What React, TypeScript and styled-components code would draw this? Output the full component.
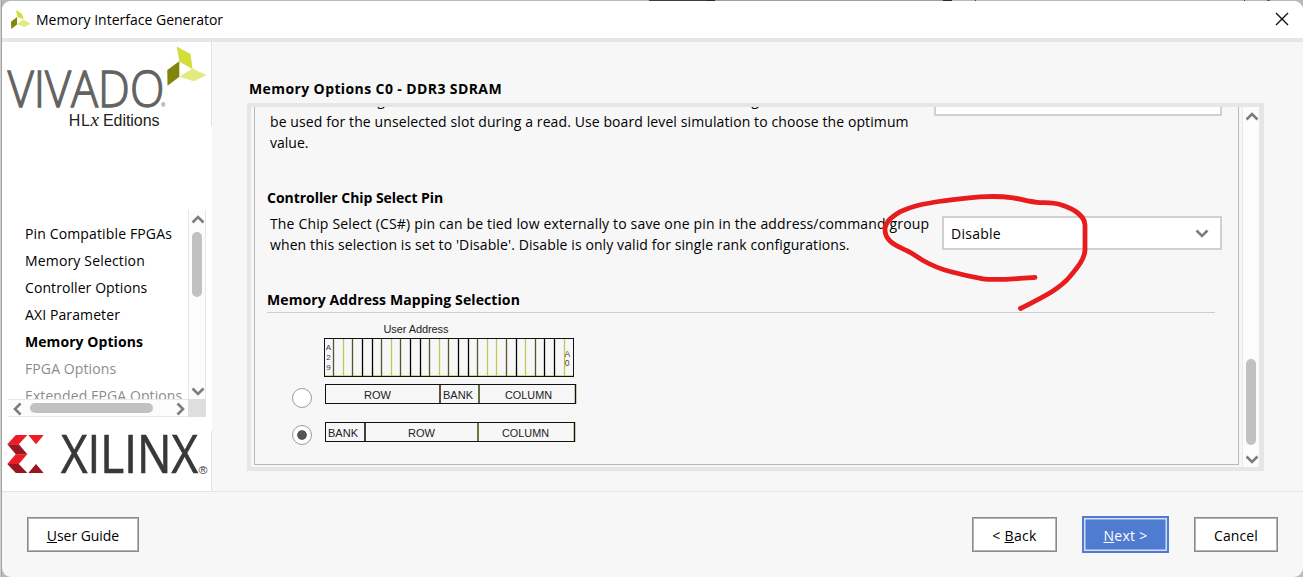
import React from 'react';
import styled, { createGlobalStyle } from 'styled-components';

const GlobalStyle = createGlobalStyle`
  * { box-sizing: border-box; }
  body { margin: 0; overflow: hidden; font: 14px "Open Sans", "Noto Sans", sans-serif; color: #000; }
`;

const Desktop = styled.div`
  width: 1303px;
  height: 577px;
  padding: 1px 0 0 2px;
  background:
    linear-gradient(90deg, transparent 649px, #3b3f4d 649px 707px, #2c2729 707px 715px, #9a9ea5 715px 943px, #2c2729 943px 952px, transparent 952px 975px, #3b3f4d 975px 976px, transparent 976px 1244px, #3b3f4d 1244px 1245px, transparent 1245px 1267px, #4a5a86 1267px 1270px, transparent 1270px) 0 0 / 100% 1px no-repeat,
    linear-gradient(90deg, #cfcfcf 1px, #a2a2a2 1px 2px, #b9b9b9 2px);
`;

const Window = styled.div`
  display: flex;
  flex-direction: column;
  position: relative;
  height: 576px;
  border-radius: 9px;
  overflow: hidden;
  background: #f7f7f7;
`;

const TitleBar = styled.header`
  display: flex;
  align-items: center;
  height: 41px;
  flex: none;
  padding: 0 14px 2px 8px;
  background: #fff;
  border-bottom: 4px solid #e6e6e6;
`;

const Text = styled.span<{ $ls?: number; $bold?: boolean }>`
  letter-spacing: ${(p) => p.$ls ?? 0}px;
  font-weight: ${(p) => (p.$bold ? 700 : 400)};
  white-space: nowrap;
`;

const TitleText = styled(Text)`
  flex: 1;
  margin-left: 5px;
  line-height: 20px;
  padding-top: 2px;
`;

const Body = styled.div`
  display: flex;
  height: 450px;
  flex: none;
  border-bottom: 1px solid #e4e4e4;
`;

const Sidebar = styled.aside`
  display: flex;
  flex-direction: column;
  width: 210px;
  flex: none;
  background: #fff;
`;

const LogoBox = styled.div<{ $h: number }>`
  height: ${(p) => p.$h}px;
  border-right: 1px solid #e2e2e2;
  svg { display: block; overflow: visible; }
`;

const NavArea = styled.div`
  display: grid;
  grid-template-columns: 180px 18px;
  grid-template-rows: 189px 18px;
  margin: 84px 0 14px 6px;
`;

const NavList = styled.nav`
  display: flex;
  flex-direction: column;
  overflow: hidden;
  padding: 10px 0 0 17px;
`;

const NavItem = styled(Text)<{ $dim?: boolean }>`
  flex: none;
  height: 27px;
  line-height: 27px;
  color: ${(p) => (p.$dim ? '#8c8c8c' : '#000')};
`;

const VScroll = styled.div`
  display: flex;
  flex-direction: column;
  align-items: center;
  background: #fcfcfc;
  border-left: 1px solid #e8e8e8;
  border-right: 1px solid #e8e8e8;
`;

const HScroll = styled.div`
  display: flex;
  align-items: center;
  background: #fcfcfc;
  border-top: 1px solid #e8e8e8;
  border-bottom: 1px solid #e8e8e8;
`;

const Thumb = styled.div<{ $w: number; $h: number; $m: string }>`
  width: ${(p) => p.$w}px;
  height: ${(p) => p.$h}px;
  margin: ${(p) => p.$m};
  border-radius: 5px;
  background: #c1c1c1;
  flex: none;
`;

const ScrollCorner = styled.div`
  background: #dedede;
`;

const Arrow = styled.svg<{ $m?: string }>`
  display: block;
  flex: none;
  margin: ${(p) => p.$m ?? 0};
  fill: none;
  stroke: #7d7d7d;
  stroke-width: 2.6;
`;

const Main = styled.main`
  flex: 1;
  padding: 35px 39px 0 35px;
`;

const PageHeading = styled(Text)`
  display: block;
  height: 26px;
  line-height: 24px;
  padding-left: 2px;
`;

const Viewport = styled.section`
  display: flex;
  height: 368px;
  width: 1017px;
  border: 4px solid #e6e6e6;
  border-right-width: 5px;
  overflow: hidden;
`;

const Content = styled.div`
  width: 985px;
  height: 358px;
  margin-left: 3px;
  padding-left: 12px;
  border: solid #b9b9b9;
  border-width: 0 1px 1px;
  flex: none;
`;

const Setting = styled.div<{ $h: number }>`
  display: flex;
  justify-content: space-between;
  height: ${(p) => p.$h}px;
  padding-right: 16px;
`;

const Lines = styled.div<{ $shift: number }>`
  display: flex;
  flex-direction: column;
  padding-left: 3px;
  margin-top: ${(p) => p.$shift}px;
  line-height: 21px;
`;

const ScrolledLine = styled(Text)`
  margin-bottom: 1px;
`;

const GroupTitle = styled(Text)<{ $h: number }>`
  display: block;
  height: ${(p) => p.$h}px;
  line-height: 22px;
`;

const Combo = styled.div<{ $w: number; $top: number }>`
  display: flex;
  align-items: center;
  justify-content: space-between;
  width: ${(p) => p.$w}px;
  height: 34px;
  flex: none;
  margin-top: ${(p) => p.$top}px;
  padding: 0 11px 0 7px;
  background: #fff;
  border: 2px solid #d0d0d0;
`;

const Rule = styled.div`
  height: 1px;
  width: 948px;
  background: #cdcdcd;
`;

const AddressDiagram = styled.svg`
  display: block;
  margin: 9px 0 0 56px;
`;

const Option = styled.div<{ $h: number }>`
  display: flex;
  height: ${(p) => p.$h}px;
  padding-left: 25px;
  svg { display: block; flex: none; }
`;

const Radio = styled.span<{ $on?: boolean }>`
  display: flex;
  width: 20px;
  height: 20px;
  margin: ${(p) => (p.$on ? 4 : 5)}px 13px 0 0;
  flex: none;
  border: 1.5px solid #9b9b9b;
  border-radius: 50%;
  background: ${(p) => (p.$on ? 'radial-gradient(circle, #555 4.4px, #fff 5.2px)' : '#fff')};
`;

const MainScroll = styled(VScroll)`
  width: 17px;
  margin-left: 3px;
  border-right: 0;
`;

const Footer = styled.footer`
  display: flex;
  align-items: center;
  flex: 1;
  padding: 0 25px 1px;
`;

const Button = styled.button<{ $w: number; $ml?: string }>`
  width: ${(p) => p.$w}px;
  height: 35px;
  margin-left: ${(p) => p.$ml ?? 0};
  padding: 2px 0 0;
  font: inherit;
  color: #000;
  background: #fff;
  border: 1px solid #8b8b8b;
  box-shadow: inset 0 0 0 1px #b4b4b4;
`;

const PrimaryButton = styled(Button)`
  height: 37px;
  color: #fff;
  background: #4f7bd0;
  border: 2px solid #4f7bd0;
  box-shadow: inset 0 0 0 1.5px #d3def4;
`;

const Annotation = styled.svg`
  position: absolute;
  left: 868px;
  top: 179px;
  pointer-events: none;
`;

const Chevron = ({ d, m }: { d: 'up' | 'down' | 'left' | 'right'; m?: string }) => {
  const path = { up: 'M1.5 9.5L7 4L12.5 9.5', down: 'M1.5 4.5L7 10L12.5 4.5', left: 'M9.5 1.5L4 7L9.5 12.5', right: 'M4.5 1.5L10 7L4.5 12.5' }[d];
  return <Arrow width="14" height="14" $m={m}><path d={path} /></Arrow>;
};

const VivadoLogo = () => (
  <svg width="209" height="84" viewBox="2 42 209 84">
    <polygon points="176.7,46.5 190.5,54 192.6,69.3 179.3,61.5" fill="#d3dd3b" />
    <polygon points="167.3,70 179.3,61.3 179.3,76.7 167.5,85.7" fill="#82850c" />
    <polygon points="179.3,76.7 192.6,68.5 206.6,75.3 193.7,81.3" fill="#e4ea80" />
    <text x="7.8" y="106.6" fontSize="49.5" fontWeight="300" fill="#636363" stroke="#636363" strokeWidth="1.3" textLength="156.5" lengthAdjust="spacingAndGlyphs">VIVADO</text>
    <text x="161" y="106.5" fontSize="5.5" fill="#636363">®</text>
    <g fontFamily="Liberation Sans, sans-serif" fontSize="16" fill="#222">
      <text x="68.8" y="125.5" textLength="21">HL</text>
      <text x="90.5" y="125.5" fontFamily="Liberation Serif, serif" fontStyle="italic" fontSize="19">x</text>
      <text x="103" y="125.5" textLength="56.5">Editions</text>
    </g>
  </svg>
);

const XilinxLogo = () => (
  <svg width="209" height="60" viewBox="2 431 209 60">
    <g fill="#ec1c24">
      <polygon points="7.3,444.3 15.8,435 27.3,435 18.8,444.3" />
      <polygon points="15.8,454.3 27.3,454.3 18.8,464 7.3,464" />
      <polygon points="28.3,435 43.7,435 36,444.3" />
    </g>
    <g fill="#9a1620">
      <polygon points="7.3,444.3 18.8,444.3 27.3,454.3 15.8,454.3" />
      <polygon points="7.3,464 18.8,464 27.3,473 15.8,473" />
      <polygon points="28.3,473 43.7,473 36,464" />
    </g>
    <text x="61" y="473" fontSize="53" fill="#383836" stroke="#383836" strokeWidth="0.7" textLength="137" lengthAdjust="spacingAndGlyphs">XILINX</text>
    <text x="198.5" y="473.5" fontSize="11" fill="#383836" fontFamily="Liberation Sans, sans-serif" textLength="9" lengthAdjust="spacingAndGlyphs">®</text>
  </svg>
);

const K = '#000';
const D = '#55552f';
const Y = '#c5c55b';
const bitLines = [D, Y, D, K, K, D, Y, D, K, K, D, Y, D, K, K, D, Y, Y, D, K, Y, D, K, K, Y];

const UserAddress = () => (
  <AddressDiagram width="252" height="61" viewBox="323 322 252 61" fontFamily="Liberation Sans, sans-serif">
    <text x="383.5" y="333" fontSize="11" textLength="65" fill="#222">User Address</text>
    <path d="M325 375.8H574" stroke="#c5c55b" />
    {bitLines.map((color, i) => (
      <path key={i} d={`M${Math.round(323.6 + (i + 1) * 9.6) + 0.5} 338V376`} stroke={color} strokeWidth="1.3" />
    ))}
    <rect x="324.5" y="338.5" width="249" height="38" fill="none" stroke="#111" />
    <g fontSize="8" fill="#333355">
      <text x="325.8" y="350">A</text>
      <text x="326.3" y="360">2</text>
      <text x="326.3" y="370">9</text>
    </g>
    <g fontSize="8.5" fill="#4a4a10">
      <text x="564.6" y="357">A</text>
      <text x="564.8" y="366">0</text>
    </g>
  </AddressDiagram>
);

type Part = { name: string; x: number; w: number; line?: number; color?: string };

const Mapping = ({ width, parts }: { width: number; parts: Part[] }) => (
  <svg width="252" height="22" fontFamily="Liberation Sans, sans-serif" fontSize="11.8" fill="#222">
    {parts.map((p) => (
      <g key={p.name}>
        {p.line !== undefined && <path d={`M${p.line} 1V21`} stroke={p.color} strokeWidth="1.6" />}
        <text x={p.x} y="15.6" textLength={p.w} lengthAdjust="spacingAndGlyphs">{p.name}</text>
      </g>
    ))}
    <path d={`M${width - 0.5} 1V21`} stroke="#4c6210" strokeWidth="1.6" />
    <rect x="0.5" y="1.5" width={width - 1} height="19" fill="none" stroke="#111" />
  </svg>
);

const steps = [
  { label: 'Pin Compatible FPGAs', ls: 0.14 },
  { label: 'Memory Selection', ls: 0.16 },
  { label: 'Controller Options', ls: 0.08 },
  { label: 'AXI Parameter', ls: 0.11 },
  { label: 'Memory Options', ls: 0.07, current: true },
  { label: 'FPGA Options', ls: 0.1, dim: true },
  { label: 'Extended FPGA Options', ls: 0.1, dim: true },
];

export default function App() {
  return (
    <Desktop>
      <GlobalStyle />
      <Window>
        <TitleBar>
          <svg width="21" height="20" viewBox="10 8 21 20">
            <polygon points="16,9 22,12.7 23.7,18.3 17.3,16" fill="#d3dd3b" />
            <polygon points="11,20.7 17,16 17,23.6 11.3,28" fill="#82850c" />
            <polygon points="17,23 23.3,18.5 30.7,22.7 24.3,26" fill="#e4ea80" />
          </svg>
          <TitleText>Memory Interface Generator</TitleText>
          <svg width="14" height="14" fill="none" stroke="#111" strokeWidth="1.4">
            <path d="M1 1L13 13M13 1L1 13" />
          </svg>
        </TitleBar>
        <Body>
          <Sidebar>
            <LogoBox $h={84}><VivadoLogo /></LogoBox>
            <NavArea>
              <NavList>
                {steps.map((s) => (
                  <NavItem key={s.label} $ls={s.ls} $bold={s.current} $dim={s.dim}>{s.label}</NavItem>
                ))}
              </NavList>
              <VScroll>
                <Chevron d="up" m="3px 0 0 1px" />
                <Thumb $w={10} $h={65} $m="5px 0 0" />
                <Chevron d="down" m="87px 0 0 1px" />
              </VScroll>
              <HScroll>
                <Chevron d="left" m="1px 0 0 3px" />
                <Thumb $w={123} $h={10} $m="0 0 1px 5px" />
                <Chevron d="right" m="1px 0 0 20px" />
              </HScroll>
              <ScrollCorner />
            </NavArea>
            <LogoBox $h={60}><XilinxLogo /></LogoBox>
          </Sidebar>
          <Main>
            <PageHeading $bold $ls={0.395}>Memory Options C0 - DDR3 SDRAM</PageHeading>
            <Viewport>
              <Content>
                <Setting $h={80}>
                  <Lines $shift={-18}>
                    <ScrolledLine $ls={0.1}>value for each signal is the chosen nominal resistance when a slot is being</ScrolledLine>
                    <Text $ls={0.1}>be used for the unselected slot during a read. Use board level simulation to choose the optimum</Text>
                    <Text>value.</Text>
                  </Lines>
                  <Combo $w={288} $top={-25} />
                </Setting>
                <GroupTitle $bold $ls={-0.04} $h={26}>Controller Chip Select Pin</GroupTitle>
                <Setting $h={76}>
                  <Lines $shift={0}>
                    <Text $ls={0.16}>The Chip Select (CS#) pin can be tied low externally to save one pin in the address/command group</Text>
                    <Text $ls={0.105}>when this selection is set to 'Disable'. Disable is only valid for single rank configurations.</Text>
                  </Lines>
                  <Combo $w={280} $top={3}>
                    <Text $ls={0.27}>Disable</Text>
                    <Chevron d="down" />
                  </Combo>
                </Setting>
                <GroupTitle $bold $ls={0.1} $h={23}>Memory Address Mapping Selection</GroupTitle>
                <Rule />
                <UserAddress />
                <Option $h={38}>
                  <Radio />
                  <Mapping
                    width={251}
                    parts={[
                      { name: 'ROW', x: 39, w: 27 },
                      { name: 'BANK', x: 118, w: 30, line: 115, color: '#3c2408' },
                      { name: 'COLUMN', x: 180, w: 47, line: 154, color: '#3c4a10' },
                    ]}
                  />
                </Option>
                <Option $h={38}>
                  <Radio $on />
                  <Mapping
                    width={250}
                    parts={[
                      { name: 'BANK', x: 3, w: 30 },
                      { name: 'ROW', x: 83, w: 27, line: 40, color: '#111' },
                      { name: 'COLUMN', x: 177, w: 47, line: 153, color: '#3c5a10' },
                    ]}
                  />
                </Option>
              </Content>
              <MainScroll>
                <Chevron d="up" m="3px 0 0 2px" />
                <Thumb $w={10} $h={86} $m="235px 0 0" />
                <Chevron d="down" m="7px 0 0 2px" />
              </MainScroll>
            </Viewport>
          </Main>
        </Body>
        <Footer>
          <Button $w={112}><Text $ls={-0.05}><u>U</u>ser Guide</Text></Button>
          <Button $w={85} $ml="auto"><Text $ls={0.35}>&lt; <u>B</u>ack</Text></Button>
          <PrimaryButton $w={87} $ml="25px"><Text $ls={0.27}><u>N</u>ext &gt;</Text></PrimaryButton>
          <Button $w={84} $ml="25px"><Text $ls={0.12}>Cancel</Text></Button>
        </Footer>
        <Annotation width="236" height="140" viewBox="870 180 236 140" fill="none" stroke="#e81c1c" strokeWidth="4.8" strokeLinecap="round" strokeLinejoin="round">
          <path d="M1035 277.3C1024 278 1013 279.3 1003 279.3C996 279.3 989 279.7 983 278.8C972 277 961 274.5 950 271.5C940 269 932 265.5 923 260.5C917 257 912 253 906.5 250.5C900 247.5 894 245 890 241C887 238 885 234 885 230C885 225 887 222 890 219C894 215.5 898 212.5 903 210.5C911 207 920 204.5 930 203C946 200 963 198.5 980 196.9C991 196.2 1003 196.4 1013 197.8C1021 199 1029 201.5 1037 202.3C1045 203 1053 202.5 1060 204.5C1066 206.3 1072 208.5 1076.5 212C1081 215.5 1085 219 1085 225V250C1084.5 259 1078 267 1070 276.5C1065 282.5 1059 287 1053 291C1042 298 1031 303 1020.5 308.5" />
        </Annotation>
      </Window>
    </Desktop>
  );
}
